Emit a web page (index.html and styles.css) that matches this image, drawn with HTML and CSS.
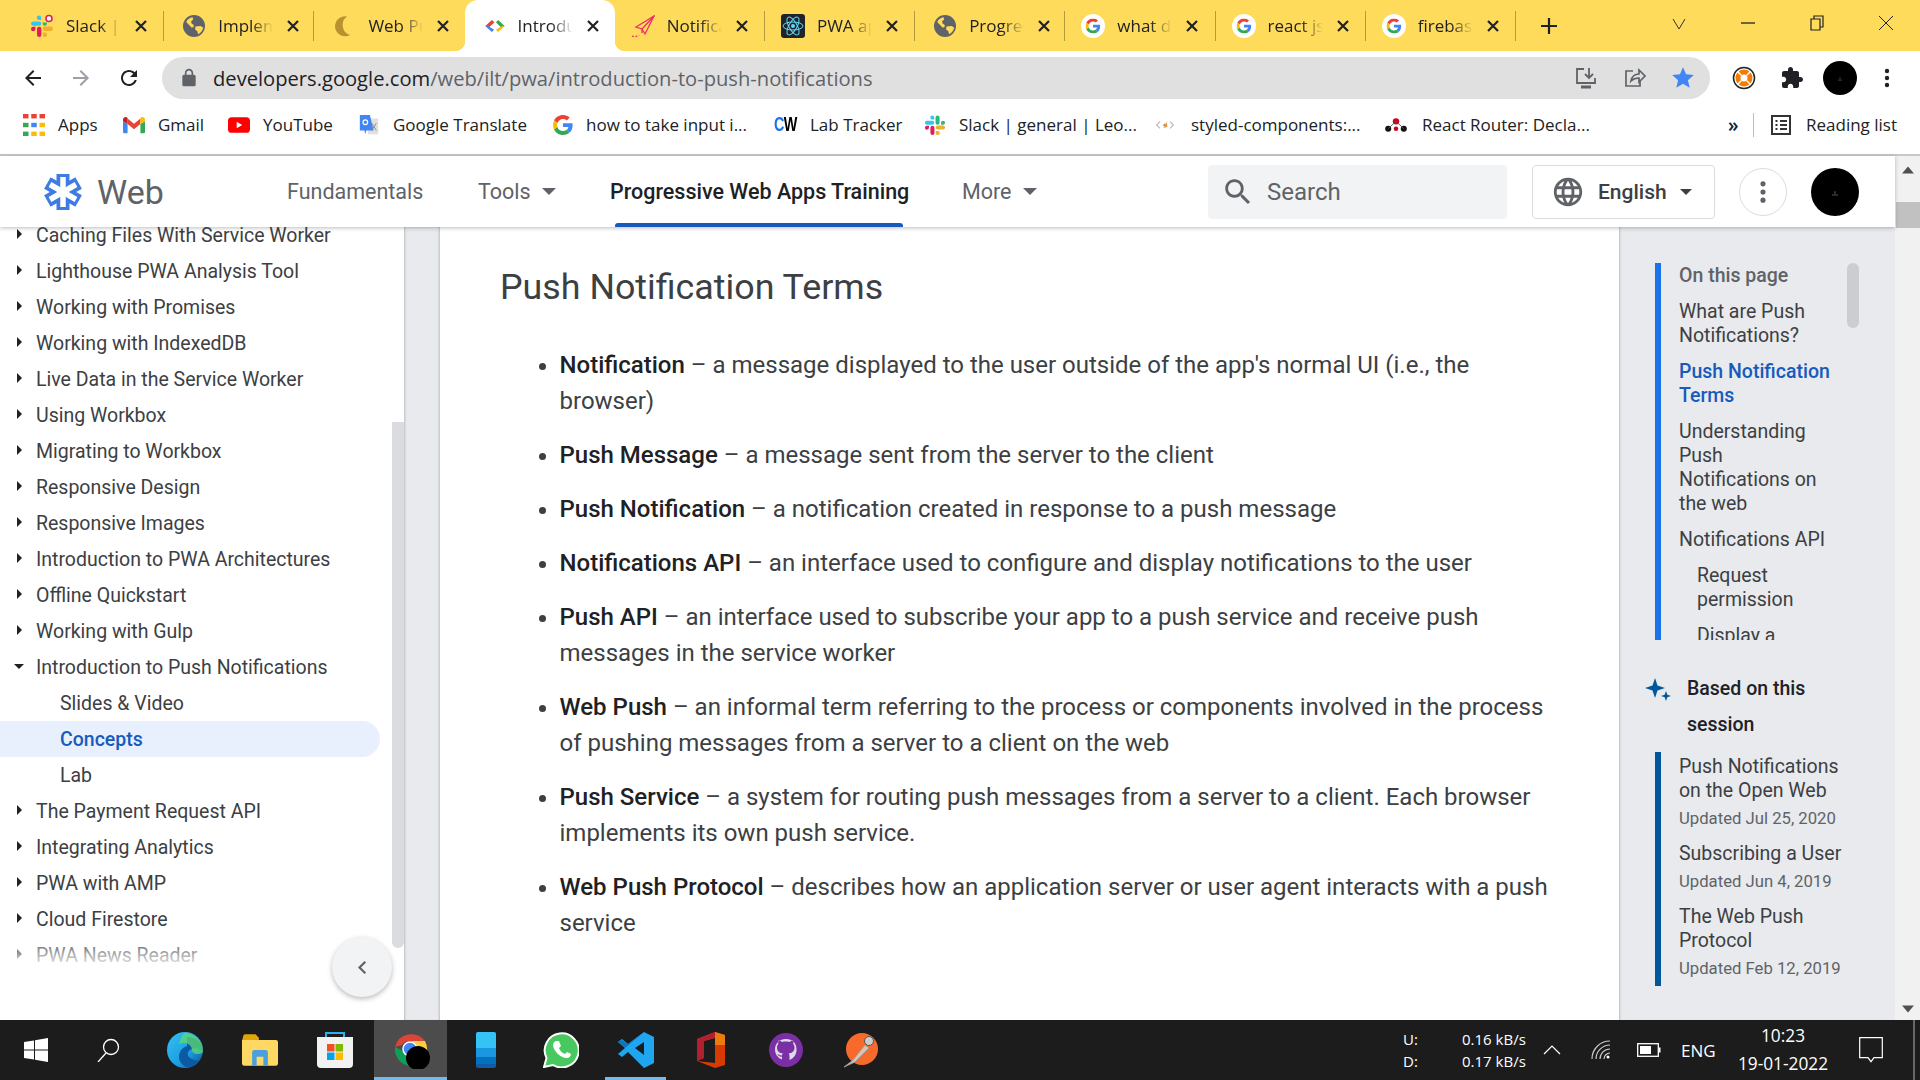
FILE: index.html
```html
<!DOCTYPE html>
<html lang="en">
<head>
<meta charset="utf-8">
<title>Introduction to Push Notifications</title>
<link rel="stylesheet" href="styles.css">
</head>
<body>
<svg class="defs" width="0" height="0">
  <defs>
    <symbol id="g" viewBox="0 0 48 48">
      <path fill="#EA4335" d="M24 9.5c3.54 0 6.71 1.22 9.21 3.6l6.85-6.85C35.9 2.38 30.47 0 24 0 14.62 0 6.51 5.38 2.56 13.22l7.98 6.19C12.43 13.72 17.74 9.5 24 9.5z"/>
      <path fill="#4285F4" d="M46.98 24.55c0-1.57-.15-3.09-.38-4.55H24v9.02h12.94c-.58 2.96-2.26 5.48-4.78 7.18l7.73 6c4.51-4.18 7.09-10.36 7.09-17.65z"/>
      <path fill="#FBBC05" d="M10.53 28.59c-.48-1.45-.76-2.99-.76-4.59s.27-3.14.76-4.59l-7.98-6.19C.92 16.46 0 20.12 0 24c0 3.88.92 7.54 2.56 10.78l7.97-6.19z"/>
      <path fill="#34A853" d="M24 48c6.48 0 11.93-2.13 15.89-5.81l-7.73-6c-2.15 1.45-4.92 2.3-8.16 2.3-6.26 0-11.57-4.22-13.47-9.91l-7.98 6.19C6.51 42.62 14.62 48 24 48z"/>
    </symbol>
    <symbol id="gcircle" viewBox="0 0 24 24">
      <circle cx="12" cy="12" r="12" fill="#fff"/>
      <use href="#g" x="4.5" y="4.5" width="15" height="15"/>
    </symbol>
    <symbol id="slack" viewBox="0 0 24 24">
      <path fill="#36C5F0" d="M9 1.5a2.2 2.2 0 0 0 0 4.4h2.2V3.7A2.2 2.2 0 0 0 9 1.5zM3.2 7.4a2.2 2.2 0 0 0 0 4.4H9a2.2 2.2 0 0 0 0-4.4z"/>
      <path fill="#2EB67D" d="M23 9.6a2.2 2.2 0 0 0-4.4 0v2.2h2.2A2.2 2.2 0 0 0 23 9.6zM17 9.6V3.7a2.2 2.2 0 0 0-4.4 0v5.9a2.2 2.2 0 0 0 4.4 0z"/>
      <path fill="#ECB22E" d="M15 23a2.2 2.2 0 0 0 0-4.4h-2.2v2.2A2.2 2.2 0 0 0 15 23zM15 17h5.8a2.2 2.2 0 0 0 0-4.4H15a2.2 2.2 0 0 0 0 4.4z"/>
      <path fill="#E01E5A" d="M1 15a2.2 2.2 0 0 0 4.4 0v-2.2H3.2A2.2 2.2 0 0 0 1 15zM7 15v5.8a2.2 2.2 0 0 0 4.4 0V15A2.2 2.2 0 0 0 7 15z"/>
    </symbol>
    <symbol id="slacktab" viewBox="0 0 24 24">
      <path fill="#36C5F0" d="M3.2 7.4a2.2 2.2 0 0 0 0 4.4H9a2.2 2.2 0 0 0 0-4.4zM9 1.500a2.200 2.200 0 0 0 0 4.400h2.200V3.700A2.200 2.200 0 0 0 9 1.500z"/>
      <path fill="#2EB67D" d="M17 9.600v-1h-4.400v1a2.200 2.200 0 0 0 4.400 0z"/>
      <circle cx="19" cy="4.500" r="3" fill="#fff" stroke="#E01E5A" stroke-width="1.600"/>
      <path fill="#ECB22E" d="M15 23a2.200 2.200 0 0 0 0-4.400h-2.200v2.200A2.200 2.200 0 0 0 15 23zM15 17h5.800a2.200 2.200 0 0 0 0-4.400H15a2.200 2.200 0 0 0 0 4.400z"/>
      <path fill="#E01E5A" d="M1 15a2.200 2.200 0 0 0 4.400 0v-2.200H3.200A2.200 2.200 0 0 0 1 15zM7 15v5.800a2.200 2.200 0 0 0 4.400 0V15A2.200 2.200 0 0 0 7 15z"/>
    </symbol>
    <symbol id="globe" viewBox="0 0 24 24">
      <circle cx="12" cy="12" r="12" fill="#5f6368"/>
      <path fill="#FFDB5C" d="M3.500 7.500c1.600-2.800 4-4.600 7-5l.6 2.300-2.200 2.100.4 2.400 2.400 1.700-.3 2.400L9.300 13.500 3.500 7.500zM13.500 12.500l5.500-.5 3 1.500c-.5 3-2.500 6-5.500 7.500l-1-3.500-2.200-1.500z"/>
    </symbol>
    <symbol id="back" viewBox="0 0 24 24"><path d="M20 11H7.830l5.590-5.590L12 4l-8 8 8 8 1.410-1.410L7.830 13H20v-2z"/></symbol>
    <symbol id="fwd" viewBox="0 0 24 24"><path d="M4 11h12.170l-5.590-5.590L12 4l8 8-8 8-1.410-1.410L16.170 13H4v-2z"/></symbol>
    <symbol id="reload" viewBox="0 0 24 24"><path d="M17.650 6.350C16.200 4.900 14.210 4 12 4c-4.420 0-7.990 3.580-7.990 8s3.570 8 7.990 8c3.730 0 6.840-2.550 7.730-6h-2.080c-.82 2.330-3.040 4-5.650 4-3.310 0-6-2.690-6-6s2.690-6 6-6c1.660 0 3.140.69 4.220 1.780L13 11h7V4l-2.350 2.350z"/></symbol>
    <symbol id="caret" viewBox="0 0 10 5"><path d="M0 0h10L5 5z"/></symbol>
    <symbol id="arrow-r" viewBox="0 0 5 10"><path d="M0 0l5 5-5 5z"/></symbol>
    <symbol id="arrow-d" viewBox="0 0 10 5"><path d="M0 0h10L5 5z"/></symbol>
    <symbol id="dots" viewBox="0 0 24 24"><circle cx="12" cy="5" r="2.200"/><circle cx="12" cy="12" r="2.200"/><circle cx="12" cy="19" r="2.200"/></symbol>
    <symbol id="avatar" viewBox="0 0 48 48"><circle cx="24" cy="24" r="24" fill="#000"/><path stroke="#555" stroke-width="1" d="M21 27h6M24 23v3"/></symbol>
    <symbol id="x" viewBox="0 0 12 12"><path d="M1 1l10 10M11 1L1 11" stroke="#202124" stroke-width="2.200" fill="none"/></symbol>
  </defs>
</svg>

<div class="screen">
  <div class="tabstrip">
    <div class="tab"><svg class="tab-ico"><use href="#slacktab"/></svg><span class="tab-text">Slack | general</span><svg class="tab-x"><use href="#x"/></svg></div>
    <div class="tab"><svg class="tab-ico tab-globe"><use href="#globe"/></svg><span class="tab-text">Implementing</span><svg class="tab-x"><use href="#x"/></svg></div>
    <div class="tab tab-pre"><svg class="tab-ico tab-moon" viewBox="0 0 24 24"><path fill="#B8922F" d="M15 2.500a10 10 0 1 0 3 18.500 10.500 10.500 0 0 1-3-18.500z"/></svg><span class="tab-text">Web Push</span><svg class="tab-x"><use href="#x"/></svg></div>
    <div class="tab tab-active"><svg class="tab-ico tab-ico-dev" viewBox="0 0 24 24"><path d="M8.500 5.500L1.500 12l3 2.500 7-6.500z" fill="#EA4335"/><path d="M1.500 12l7 6.500 2.500-2.500-6.500-4z" fill="#4285F4"/><path d="M15.500 5.500L22.500 12l-3 2.500-6.500-6.500z" fill="#34A853"/><path d="M22.500 12l-7 6.500-2.500-2.500 6.500-4z" fill="#FBBC05"/></svg><span class="tab-text">Introduction</span><svg class="tab-x"><use href="#x"/></svg></div>
    <div class="tab"><svg class="tab-ico" viewBox="0 0 24 24" fill="none" stroke="#EF2B6B" stroke-width="1.300"><path d="M23 2L5 13l6 2 3 5z"/><path d="M23 2L11 15v4"/><path d="M1 22c2 1 5 1 7-1" stroke-dasharray="2 1.500"/></svg><span class="tab-text">Notifications</span><svg class="tab-x"><use href="#x"/></svg></div>
    <div class="tab"><svg class="tab-ico" viewBox="0 0 24 24"><rect width="24" height="24" rx="3" fill="#20232A"/><g fill="none" stroke="#61DAFB" stroke-width="1"><ellipse cx="12" cy="12" rx="10" ry="4"/><ellipse cx="12" cy="12" rx="10" ry="4" transform="rotate(60 12 12)"/><ellipse cx="12" cy="12" rx="10" ry="4" transform="rotate(120 12 12)"/></g><circle cx="12" cy="12" r="2" fill="#61DAFB"/></svg><span class="tab-text">PWA app</span><svg class="tab-x"><use href="#x"/></svg></div>
    <div class="tab"><svg class="tab-ico tab-globe"><use href="#globe"/></svg><span class="tab-text">Progressive</span><svg class="tab-x"><use href="#x"/></svg></div>
    <div class="tab"><svg class="tab-ico"><use href="#gcircle"/></svg><span class="tab-text">what does</span><svg class="tab-x"><use href="#x"/></svg></div>
    <div class="tab"><svg class="tab-ico"><use href="#gcircle"/></svg><span class="tab-text">react js</span><svg class="tab-x"><use href="#x"/></svg></div>
    <div class="tab"><svg class="tab-ico"><use href="#gcircle"/></svg><span class="tab-text">firebase</span><svg class="tab-x"><use href="#x"/></svg></div>
    <svg class="tab-plus" viewBox="0 0 18 18"><path d="M9 1v16M1 9h16" stroke="#202124" stroke-width="2.200"/></svg>
    <div class="win-ctrl">
      <svg class="wc" viewBox="0 0 18 18"><path d="M3 5l6 10 6-10" fill="none" stroke="#333" stroke-width="1"/></svg>
      <svg class="wc" viewBox="0 0 18 18"><path d="M2 9h14" stroke="#222" stroke-width="1.300"/></svg>
      <svg class="wc" viewBox="0 0 18 18"><path d="M3 5h9v11H3zM6 5V2h9v11h-3" fill="none" stroke="#222" stroke-width="1.200"/></svg>
      <svg class="wc" viewBox="0 0 18 18"><path d="M2 2l14 14M16 2L2 16" stroke="#222" stroke-width="1"/></svg>
    </div>
  </div>

  <div class="toolbar">
    <svg class="tb-ico"><use href="#back"/></svg>
    <svg class="tb-ico tb-off"><use href="#fwd"/></svg>
    <svg class="tb-ico"><use href="#reload"/></svg>
    <div class="omnibox">
      <svg class="lock" viewBox="0 0 24 24"><path d="M18 8h-1V6c0-2.760-2.240-5-5-5S7 3.240 7 6v2H6c-1.100 0-2 .9-2 2v10c0 1.100.9 2 2 2h12c1.100 0 2-.9 2-2V10c0-1.100-.9-2-2-2zM9 6c0-1.660 1.340-3 3-3s3 1.340 3 3v2H9V6z"/></svg>
      <span class="url"><span class="url-host">developers.google.com</span>/web/ilt/pwa/introduction-to-push-notifications</span>
      <svg class="om-ico om-first" viewBox="0 0 24 24" fill="none" stroke="#5f6368" stroke-width="1.800"><path d="M10 3H3v14h18v-5"/><path d="M15 2v10M11 8l4 4 4-4"/><path d="M7 21h10" stroke-width="3"/></svg>
      <svg class="om-ico" viewBox="0 0 24 24" fill="none" stroke="#5f6368" stroke-width="1.700"><path d="M11 5H4v15h14v-6"/><path d="M9 15c1-5 4-7 8-7V4l6 6-6 6v-4c-3 0-6 1-8 3z"/></svg>
      <svg class="om-ico om-star" viewBox="0 0 24 24"><path fill="#4285F4" d="M12 17.270L18.180 21l-1.640-7.030L22 9.240l-7.190-.61L12 2 9.190 8.630 2 9.240l5.460 4.730L5.820 21z"/></svg>
    </div>
    <svg class="ext-ico" viewBox="0 0 24 24"><circle cx="12" cy="12" r="10.500" fill="#fff" stroke="#222" stroke-width="1.500"/><circle cx="12" cy="12" r="6" fill="none" stroke="#F57C00" stroke-width="5"/><path d="M12 3v5M12 16v5M3 12h5M16 12h5" stroke="#fff" stroke-width="1.500" transform="rotate(45 12 12)"/></svg>
    <svg class="ext-ico" viewBox="0 0 24 24"><path fill="#202124" d="M20.500 11H19V7c0-1.100-.9-2-2-2h-4V3.500C13 2.120 11.880 1 10.500 1S8 2.120 8 3.500V5H4c-1.100 0-1.990.9-1.990 2v3.800H3.500c1.490 0 2.700 1.210 2.700 2.700s-1.210 2.700-2.700 2.700H2V20c0 1.100.9 2 2 2h3.800v-1.500c0-1.490 1.210-2.700 2.700-2.700 1.490 0 2.700 1.210 2.700 2.700V22H17c1.100 0 2-.9 2-2v-4h1.500c1.380 0 2.500-1.120 2.500-2.500S21.880 11 20.500 11z"/></svg>
    <svg class="tb-avatar"><use href="#avatar"/></svg>
    <svg class="tb-dots"><use href="#dots"/></svg>
  </div>

  <div class="bookmarks">
    <div class="bm bm-apps"><svg class="bm-ico" viewBox="0 0 20 20"><rect x="0" y="0" width="5" height="4" fill="#EA4335"/><rect x="7.500" y="0" width="5" height="4" fill="#EA4335"/><rect x="15" y="0" width="5" height="4" fill="#EA4335"/><rect x="0" y="8" width="5" height="4" fill="#34A853"/><rect x="7.500" y="8" width="5" height="4" fill="#4285F4"/><rect x="15" y="8" width="5" height="4" fill="#FBBC05"/><rect x="0" y="16" width="5" height="4" fill="#34A853"/><rect x="7.500" y="16" width="5" height="4" fill="#FBBC05"/><rect x="15" y="16" width="5" height="4" fill="#FBBC05"/></svg>Apps</div>
    <div class="bm bm-gmail"><svg class="bm-ico" viewBox="0 0 24 18"><path fill="#4285F4" d="M0 5v11.500A1.500 1.500 0 0 0 1.500 18H5V8z"/><path fill="#34A853" d="M24 5v11.500a1.500 1.500 0 0 1-1.500 1.500H19V8z"/><path fill="#EA4335" d="M5 8v-6l7 5.500L19 2v6l-7 5.500z"/><path fill="#C5221F" d="M0 5V3c0-2.500 3-3.500 5-2v7z"/><path fill="#FBBC04" d="M24 5V3c0-2.500-3-3.500-5-2v7z"/></svg>Gmail</div>
    <div class="bm bm-yt"><svg class="bm-ico" viewBox="0 0 24 17"><rect width="24" height="17" rx="4" fill="#F00"/><path d="M9.500 5v7l6-3.500z" fill="#fff"/></svg>YouTube</div>
    <div class="bm bm-tr"><svg class="bm-ico" viewBox="0 0 24 24"><path d="M9 5h13v17H11z" fill="#E0E0E0"/><path d="M2 1h11l4 17H9l-1 4-1-4H2z" fill="#4285F4"/><circle cx="8" cy="9" r="2.500" fill="none" stroke="#fff" stroke-width="1.300"/><path d="M15 10l5 8M20 10l-5 8" stroke="#888" stroke-width="1"/></svg>Google Translate</div>
    <div class="bm bm-how"><svg class="bm-ico bm-ico-g"><use href="#g"/></svg>how to take input i...</div>
    <div class="bm bm-lab"><span class="cw"><span class="cw-c">C</span>W</span>Lab Tracker</div>
    <div class="bm bm-sl"><svg class="bm-ico"><use href="#slack"/></svg>Slack | general | Leo...</div>
    <div class="bm bm-st"><svg class="bm-ico bm-ico-st" viewBox="0 0 24 24"><path d="M6 8l-4 4 4 4M18 8l4 4-4 4" fill="none" stroke="#bbb" stroke-width="1.500"/><path d="M10 16l4-8 1 6z" fill="#E5A13B"/><path d="M9 13l3-3 1 3z" fill="#B06CC9"/></svg>styled-components:...</div>
    <div class="bm bm-rr"><svg class="bm-ico bm-ico-rr" viewBox="0 0 24 18"><circle cx="12" cy="5" r="3.500" fill="#D0021B"/><circle cx="3.500" cy="13" r="3.300" fill="#121212"/><circle cx="20.500" cy="13" r="3.300" fill="#121212"/><circle cx="12" cy="13" r="2.500" fill="#D0021B"/><path d="M3.500 13L12 5l8.500 8" fill="none" stroke="#555" stroke-width="1"/></svg>React Router: Decla...</div>
    <span class="bm-more">»</span>
    <span class="bm-sep"></span>
    <div class="bm bm-rl"><svg class="bm-ico bm-rl-ico" viewBox="0 0 20 20" fill="none" stroke="#333" stroke-width="2"><rect x="1" y="1" width="18" height="18"/><path d="M4.500 6h2M9 6h7M4.500 10h2M9 10h7M4.500 14h2M9 14h7"/></svg>Reading list</div>
  </div>

  <div class="page">
    <div class="page-col">
      <header class="site-header">
        <svg class="logo" viewBox="0 0 42 42"><g stroke="#3F7BE4" stroke-width="13" stroke-linecap="butt"><path d="M21 21V3"/><path d="M21 21L36.600 12"/><path d="M21 21L36.600 30"/><path d="M21 21V39"/><path d="M21 21L5.400 30"/><path d="M21 21L5.400 12"/></g><g stroke="#fff" stroke-width="5.500"><path d="M21 21V6"/><path d="M21 21L34 13.500"/><path d="M21 21L34 28.500"/><path d="M21 21V36"/><path d="M21 21L8 28.500"/><path d="M21 21L8 13.500"/></g></svg>
        <span class="brand">Web</span>
        <nav class="nav">
          <span class="nav-item nav-fund">Fundamentals</span>
          <span class="nav-item nav-tools">Tools<svg class="nav-caret"><use href="#caret"/></svg></span>
          <span class="nav-item nav-active">Progressive Web Apps Training</span>
          <span class="nav-item nav-more">More<svg class="nav-caret"><use href="#caret"/></svg></span>
        </nav>
        <div class="search">
          <svg class="search-ico" viewBox="0 0 24 24"><path d="M15.500 14h-.79l-.28-.27C15.410 12.590 16 11.110 16 9.500 16 5.910 13.090 3 9.500 3S3 5.910 3 9.500 5.910 16 9.500 16c1.610 0 3.090-.59 4.230-1.570l.27.28v.79l5 4.990L20.490 19l-4.990-5zm-6 0C7.010 14 5 11.990 5 9.500S7.010 5 9.500 5 14 7.010 14 9.500 11.990 14 9.500 14z"/></svg>
          <span>Search</span>
        </div>
        <div class="lang">
          <svg class="lang-ico" viewBox="0 0 24 24"><path d="M11.990 2C6.470 2 2 6.480 2 12s4.470 10 9.990 10C17.520 22 22 17.520 22 12S17.520 2 11.990 2zm6.930 6h-2.950c-.32-1.250-.78-2.450-1.380-3.560 1.840.63 3.370 1.910 4.330 3.560zM12 4.040c.83 1.200 1.480 2.530 1.910 3.960h-3.820c.43-1.430 1.080-2.760 1.910-3.960zM4.260 14C4.100 13.360 4 12.690 4 12s.1-1.360.26-2h3.380c-.08.66-.14 1.320-.14 2 0 .68.06 1.340.14 2H4.260zm.82 2h2.950c.32 1.250.78 2.450 1.380 3.560-1.840-.63-3.370-1.900-4.330-3.560zm2.950-8H5.080c.96-1.660 2.490-2.930 4.330-3.560C8.810 5.550 8.350 6.750 8.030 8zM12 19.960c-.83-1.200-1.480-2.530-1.910-3.960h3.820c-.43 1.430-1.080 2.760-1.910 3.960zM14.340 14H9.660c-.09-.66-.16-1.320-.16-2 0-.68.07-1.350.16-2h4.680c.09.650.16 1.320.16 2 0 .68-.07 1.340-.16 2zm.25 5.560c.6-1.110 1.060-2.310 1.380-3.560h2.950c-.96 1.650-2.490 2.930-4.330 3.560zM16.360 14c.08-.66.14-1.320.14-2 0-.68-.06-1.340-.14-2h3.380c.16.64.26 1.310.26 2s-.1 1.360-.26 2h-3.380z"/></svg>
          <span class="lang-text">English</span>
          <svg class="lang-caret"><use href="#caret"/></svg>
        </div>
        <div class="more-btn"><svg class="more-dots"><use href="#dots"/></svg></div>
        <svg class="hd-avatar"><use href="#avatar"/></svg>
      </header>

      <div class="body-row">
        <aside class="sidebar">
          <ul class="side-list">
            <li class="side-item"><svg class="ar"><use href="#arrow-r"/></svg>Caching Files With Service Worker</li>
            <li class="side-item"><svg class="ar"><use href="#arrow-r"/></svg>Lighthouse PWA Analysis Tool</li>
            <li class="side-item"><svg class="ar"><use href="#arrow-r"/></svg>Working with Promises</li>
            <li class="side-item"><svg class="ar"><use href="#arrow-r"/></svg>Working with IndexedDB</li>
            <li class="side-item"><svg class="ar"><use href="#arrow-r"/></svg>Live Data in the Service Worker</li>
            <li class="side-item"><svg class="ar"><use href="#arrow-r"/></svg>Using Workbox</li>
            <li class="side-item"><svg class="ar"><use href="#arrow-r"/></svg>Migrating to Workbox</li>
            <li class="side-item"><svg class="ar"><use href="#arrow-r"/></svg>Responsive Design</li>
            <li class="side-item"><svg class="ar"><use href="#arrow-r"/></svg>Responsive Images</li>
            <li class="side-item"><svg class="ar"><use href="#arrow-r"/></svg>Introduction to PWA Architectures</li>
            <li class="side-item"><svg class="ar"><use href="#arrow-r"/></svg>Offline Quickstart</li>
            <li class="side-item"><svg class="ar"><use href="#arrow-r"/></svg>Working with Gulp</li>
            <li class="side-item"><svg class="ar-d"><use href="#arrow-d"/></svg>Introduction to Push Notifications</li>
            <li class="side-item side-sub">Slides &amp; Video</li>
            <li class="side-item side-sub side-cur">Concepts</li>
            <li class="side-item side-sub">Lab</li>
            <li class="side-item"><svg class="ar"><use href="#arrow-r"/></svg>The Payment Request API</li>
            <li class="side-item"><svg class="ar"><use href="#arrow-r"/></svg>Integrating Analytics</li>
            <li class="side-item"><svg class="ar"><use href="#arrow-r"/></svg>PWA with AMP</li>
            <li class="side-item"><svg class="ar"><use href="#arrow-r"/></svg>Cloud Firestore</li>
            <li class="side-item"><svg class="ar"><use href="#arrow-r"/></svg>PWA News Reader</li>
          </ul>
          <div class="side-fade"></div>
          <div class="side-thumb"></div>
          <div class="fab"><svg class="fab-ico" viewBox="0 0 12 18"><path d="M10 2L3 9l7 7" fill="none" stroke="#5f6368" stroke-width="2.600"/></svg></div>
        </aside>
        <div class="gutter"></div>
        <main class="main">
          <h2 class="title">Push Notification Terms</h2>
          <ul class="terms">
            <li><b>Notification</b> – a message displayed to the user outside of the app's normal UI (i.e., the browser)</li>
            <li><b>Push Message</b> – a message sent from the server to the client</li>
            <li><b>Push Notification</b> – a notification created in response to a push message</li>
            <li><b>Notifications API</b> – an interface used to configure and display notifications to the user</li>
            <li><b>Push API</b> – an interface used to subscribe your app to a push service and receive push messages in the service worker</li>
            <li><b>Web Push</b> – an informal term referring to the process or components involved in the process of pushing messages from a server to a client on the web</li>
            <li><b>Push Service</b> – a system for routing push messages from a server to a client. Each browser implements its own push service.</li>
            <li><b>Web Push Protocol</b> – describes how an application server or user agent interacts with a push service</li>
          </ul>
        </main>
        <aside class="toc">
          <div class="toc-box">
            <div class="toc-thumb"></div>
            <div class="toc-head">On this page</div>
            <div class="toc-item">What are Push Notifications?</div>
            <div class="toc-item toc-cur">Push Notification Terms</div>
            <div class="toc-item">Understanding Push Notifications on the web</div>
            <div class="toc-item">Notifications API</div>
            <div class="toc-item toc-sub">Request permission</div>
            <div class="toc-item toc-sub">Display a notification</div>
          </div>
          <div class="based">
            <svg class="spark" viewBox="0 0 26 24"><path fill="#01579B" d="M10 1l2.500 7.500L20 11l-7.500 2.500L10 21l-2.500-7.500L0 11l7.500-2.500z"/><path fill="#01579B" d="M21 14l1.300 3.700L26 19l-3.700 1.300L21 24l-1.300-3.700L16 19l3.700-1.300z"/></svg>
            <span class="based-text">Based on this session</span>
          </div>
          <div class="sess">
            <div class="sess-t">Push Notifications on the Open Web</div>
            <div class="sess-d">Updated Jul 25, 2020</div>
            <div class="sess-t">Subscribing a User</div>
            <div class="sess-d">Updated Jun 4, 2019</div>
            <div class="sess-t">The Web Push Protocol</div>
            <div class="sess-d">Updated Feb 12, 2019</div>
          </div>
        </aside>
      </div>
    </div>
    <div class="page-scroll">
      <svg class="ps-arrow" viewBox="0 0 10 6"><path d="M0 6h10L5 0z"/></svg>
      <div class="ps-thumb"></div>
      <svg class="ps-arrow ps-down" viewBox="0 0 10 6"><path d="M0 0h10L5 6z"/></svg>
    </div>
  </div>

  <footer class="taskbar">
    <div class="tk tk-first"><svg class="tk-ico" viewBox="0 0 24 24"><path fill="#fff" d="M0 4l10-1.500V11.500H0zM11 2.300L24 0v11.500H11zM0 12.500h10v9L0 20zM11 12.500h13V24l-13-2.200z"/></svg></div>
    <div class="tk"><svg class="tk-ico tk-search" viewBox="0 0 24 24" fill="none" stroke="#fff" stroke-width="1.300"><circle cx="15" cy="9" r="7.500"/><path d="M10 15L2 24"/></svg></div>
    <div class="tk"><svg class="tk-ico tk-big" viewBox="0 0 36 36"><defs><linearGradient id="edge" x1="0" y1="0" x2="1" y2="1"><stop offset="0" stop-color="#35C1F1"/><stop offset=".6" stop-color="#1B9DE2"/><stop offset="1" stop-color="#114A8B"/></linearGradient></defs><circle cx="18" cy="18" r="18" fill="url(#edge)"/><path d="M20 5c8 0 16 5 16 15-3-3-7-5-11-3-4 1-6 6-2 9 3 2 7 3 10 2-3 5-9 8-14 7 4 1-7-1-7-10 0-7 5-10 8-11z" fill="#0C59A4"/><path d="M18 1c9 0 18 7 18 18 0 2-2 3-5 3-4 0-6-2-6-4 0-5-6-9-13-6 2-7 4-11 6-11z" fill="#5DDB6D" opacity=".75"/></svg></div>
    <div class="tk"><svg class="tk-ico tk-big" viewBox="0 0 32 28"><path d="M1 2a2 2 0 0 1 2-2h9l3 3v3H0z" fill="#E0A608"/><path d="M0 5h30a2 2 0 0 1 2 2v19a2 2 0 0 1-2 2H2a2 2 0 0 1-2-2z" fill="#FFD764"/><path d="M9 28V16a2 2 0 0 1 2-2h10a2 2 0 0 1 2 2v12h-4v-8h-6v8z" fill="#4AA0DF"/></svg></div>
    <div class="tk"><svg class="tk-ico tk-big" viewBox="0 0 36 36"><path d="M0 5h36v27a4 4 0 0 1-4 4H4a4 4 0 0 1-4-4z" fill="#F2F2F2"/><path d="M9 5V1h18v4" fill="none" stroke="#2AB2F0" stroke-width="2"/><rect x="10" y="12" width="7.500" height="7.500" fill="#F25022"/><rect x="18.500" y="12" width="7.500" height="7.500" fill="#7FBA00"/><rect x="10" y="20.500" width="7.500" height="7.500" fill="#00A4EF"/><rect x="18.500" y="20.500" width="7.500" height="7.500" fill="#FFB900"/></svg></div>
    <div class="tk tk-active"><svg class="tk-ico tk-chrome" viewBox="0 0 38 38"><path d="M3 16A17 17 0 0 1 33 10H18a9 9 0 0 0-8 4z" fill="#DB4437"/><path d="M3 16A17 17 0 0 0 17 35l6-10a9 9 0 0 1-12-5z" fill="#0F9D58"/><path d="M33 10H19a9 9 0 0 1 4 15l-6 10A17 17 0 0 0 33 10z" fill="#FFCD40"/><circle cx="18" cy="18" r="7" fill="#4285F4" stroke="#fff" stroke-width="1.500"/><circle cx="26" cy="27" r="12" fill="#000"/></svg></div>
    <div class="tk"><svg class="tk-ico tk-phone" viewBox="0 0 20 36"><rect width="20" height="36" rx="2" fill="#0F5DA8"/><path d="M0 2a2 2 0 0 1 2-2h16a2 2 0 0 1 2 2v14H0z" fill="#35C3F5"/><rect y="16" width="20" height="9" fill="#1A97DF"/><rect y="25" width="20" height="7" fill="#0570BE"/></svg></div>
    <div class="tk"><svg class="tk-ico tk-big" viewBox="0 0 36 36"><path d="M1 35l2.500-9A17 17 0 1 1 10 33z" fill="#48C95F" stroke="#fff" stroke-width="2"/><path fill="#fff" d="M13 9c-1 0-3 2-3 4 0 5 7 13 14 13 2 0 4-2 4-4l-4-2-2 2c-3-1-5-3-6-6l2-2-2-5z"/></svg></div>
    <div class="tk tk-vs"><svg class="tk-ico tk-big" viewBox="0 0 36 36"><path d="M26 0l10 5v26l-10 5L10 20l-6 5-4-3 7-6-7-6 4-3 6 5zM26 10L17 16l9 7z" fill="#1FA6F0"/><path d="M26 0L10 12 4 8 0 10l7 6 19-16z" fill="#0B78BE"/></svg></div>
    <div class="tk"><svg class="tk-ico tk-big" viewBox="0 0 28 36"><path d="M0 7L18 0l10 3v30l-10 3L0 29l18 2V6L7 9v17L0 29z" fill="#D83B01"/><path d="M0 7L18 0v6L7 9v17l-7 3z" fill="#B0202F"/><path d="M18 0l10 3v10H18z" fill="#EB7B0F"/></svg></div>
    <div class="tk"><svg class="tk-ico tk-big" viewBox="0 0 36 36"><circle cx="18" cy="18" r="17" fill="#7B2FA5"/><path fill="#DCDCE6" d="M18 7c-6.500 0-11 4.500-11 10.500 0 4.500 2.800 8.500 7 10v-3c-3 1-4-2-5-2.500 2 0 2.500 2 5 1.500 0-1 .3-1.500 1-2-3.500-.4-6-2-6-6 0-1.500.5-2.500 1.300-3.500-.3-1-.2-2.300.2-3.500 1.500 0 2.500.7 3.500 1.500 2.500-.6 5-.6 7.500 0 1-.8 2-1.500 3.500-1.500.4 1.200.5 2.500.2 3.500.8 1 1.300 2 1.300 3.500 0 4-2.500 5.600-6 6 .7.600 1 1.500 1 2.500v4c4.200-1.500 7-5.500 7-10C29 11.500 24.500 7 18 7z"/></svg></div>
    <div class="tk"><svg class="tk-ico tk-big" viewBox="0 0 36 36"><circle cx="19" cy="17" r="16" fill="#F76A2C"/><path d="M1 35l8-6 13-16 4 3L12 30z" fill="#E3C1A8" stroke="#999" stroke-width="1"/><circle cx="26" cy="9" r="4.500" fill="#ccc" stroke="#555" stroke-width="1"/></svg></div>
    <div class="tray">
      <div class="net-labels"><span>U:</span><span>D:</span></div>
      <div class="net-values"><span>0.16 kB/s</span><span>0.17 kB/s</span></div>
      <svg class="tray-chev" viewBox="0 0 18 10"><path d="M1 9l8-8 8 8" fill="none" stroke="#fff" stroke-width="1.200"/></svg>
      <svg class="tray-wifi" viewBox="0 0 20 20" fill="none" stroke="#ccc" stroke-width="1.200"><path d="M1 19A18 18 0 0 1 19 1M5 19A14 14 0 0 1 19 5M9 19A10 10 0 0 1 19 9M13 19a6 6 0 0 1 6-6"/><circle cx="17" cy="17" r="1.500" fill="#fff" stroke="none"/></svg>
      <svg class="tray-bat" viewBox="0 0 24 14"><rect x=".7" y=".7" width="20.600" height="12.600" fill="none" stroke="#fff" stroke-width="1.300"/><rect x="3" y="3" width="11" height="8" fill="#fff"/><rect x="22" y="4.500" width="1.500" height="5" fill="#fff"/></svg>
      <span class="tray-eng">ENG</span>
      <div class="clock"><span>10:23</span><span>19-01-2022</span></div>
      <svg class="tray-note" viewBox="0 0 24 26"><path d="M.7.7h22.600v20H15l-3 4-3-4H.7z" fill="none" stroke="#fff" stroke-width="1.200"/></svg>
    </div>
  </footer>
</div>
</body>
</html>
```
FILE: styles.css
```css
* { box-sizing: border-box; }
html, body { margin: 0; padding: 0; }
.defs { position: absolute; }
.screen { width: 1920px; height: 1080px; overflow: hidden; display: flex; flex-direction: column; font-family: Roboto, "Liberation Sans", sans-serif; background: #fff; }
svg { display: block; flex: none; }

/* tab strip */
.tabstrip { height: 51px; background: #FFDB5C; display: flex; align-items: stretch; padding-left: 14px; flex: none; font-family: "Open Sans", sans-serif; }
.tab { width: 150.2px; position: relative; display: flex; align-items: center; padding-left: 16px; color: #202124; font-size: 17px; flex: none; }
.tab::after { content: ""; position: absolute; right: 0; top: 11px; height: 30px; width: 1px; background: #B39B3E; }
.tab-pre::after { display: none; }
.tab-active { background: #fff; border-radius: 13px 13px 0 0; padding-left: 19px; z-index: 1; }
.tab-active::after { left: -10px; right: auto; top: auto; bottom: 0; width: 10px; height: 10px; background: radial-gradient(circle at 0 0, #FFDB5C 10px, #fff 10.5px); }
.tab-active::before { content: ""; position: absolute; right: -10px; bottom: 0; width: 10px; height: 10px; background: radial-gradient(circle at 100% 0, #FFDB5C 10px, #fff 10.5px); }
.tab-ico { width: 24px; height: 24px; }
.tab-globe { width: 22px; height: 22px; margin: 0 1px 0 3px; }
.tab-moon { margin-left: 2px; }
.tab-ico-dev { width: 22px; height: 22px; }
.tab-text { margin-left: 12px; width: 55px; overflow: hidden; white-space: nowrap; -webkit-mask-image: linear-gradient(90deg, #000 60%, transparent 100%); mask-image: linear-gradient(90deg, #000 60%, transparent 100%); }
.tab-x { width: 12px; height: 12px; margin-left: 14px; }
.tab-plus { width: 18px; height: 18px; margin: 17px 0 0 24px; }
.win-ctrl { display: flex; align-items: center; gap: 51px; margin: -6px 0 0 112px; }
.wc { width: 18px; height: 18px; }

/* toolbar */
.toolbar { height: 54px; flex: none; display: flex; align-items: center; padding: 0 21px; position: relative; background: #fff; }
.tb-ico { width: 24px; height: 24px; margin-right: 24px; fill: #202124; }
.tb-off { fill: #9AA0A6; }
.omnibox { width: 1552px; height: 42px; margin-left: -3px; background: #E0E0E0; border-radius: 21px; display: flex; align-items: center; padding-left: 17px; }
.lock { width: 20px; height: 20px; fill: #5f6368; }
.url { margin-left: 14px; font-family: "Open Sans", sans-serif; font-size: 20.150px; color: #5f6368; white-space: nowrap; }
.url-host { color: #202124; }
.om-ico { width: 24px; height: 24px; margin-left: 24px; }
.om-first { margin-left: auto; }
.om-star { width: 26px; height: 26px; margin-right: 14px; }
.ext-ico { width: 24px; height: 24px; margin-left: 22px; margin-right: 2px; }
.tb-avatar { width: 34px; height: 34px; margin-left: 17px; }
.tb-dots { width: 24px; height: 24px; margin-left: 18px; fill: #202124; }

/* bookmarks */
.bookmarks { height: 51px; flex: none; display: flex; align-items: center; padding: 0 0 10px 23px; font-family: "Open Sans", sans-serif; font-size: 17px; color: #202124; border-bottom: 2px solid #C8C8C8; white-space: nowrap; }
.bm { display: flex; align-items: center; flex: none; }
.bm-ico { width: 22px; height: 22px; margin-right: 13px; }
.bm-ico-g { width: 20px; height: 20px; margin-right: 13px; }
.bm-ico-st { width: 20px; height: 20px; margin-right: 16px; }
.bm-ico-rr { margin-right: 15px; }
.bm-rl-ico { width: 20px; height: 20px; margin-right: 15px; }
.bm-apps { width: 100px; } .bm-gmail { width: 105px; } .bm-yt { width: 130px; } .bm-tr { width: 195px; }
.bm-how { width: 221px; } .bm-lab { width: 150px; } .bm-sl { width: 231px; } .bm-st { width: 230px; } .bm-rr { width: 343px; }
.cw { width: 24px; margin-right: 12px; font-weight: 800; font-size: 20px; letter-spacing: -1px; color: #000; font-family: "Liberation Sans", sans-serif; transform: scaleX(.72); transform-origin: left center; white-space: nowrap; }
.cw-c { color: #1A73E8; }
.bm-more { width: 25px; font-size: 19px; font-weight: 600; }
.bm-sep { width: 1px; height: 24px; background: #BDBDBD; margin-right: 17px; }

/* page */
.page { flex: 1; min-height: 0; display: flex; }
.page-col { width: 1895px; display: flex; flex-direction: column; }
.page-scroll { width: 25px; background: #F1F1F1; display: flex; flex-direction: column; align-items: center; padding-top: 10px; }
.ps-arrow { width: 12px; height: 8px; fill: #505050; }
.ps-thumb { width: 24px; height: 26px; background: #C1C1C1; margin-top: 28px; }
.ps-down { margin-top: auto; margin-bottom: 7px; }

.site-header { height: 71px; flex: none; background: #fff; display: flex; align-items: center; position: relative; z-index: 3; box-shadow: 0 1px 4px rgba(60,64,67,.35); padding-left: 42px; }
.logo { width: 42px; height: 42px; }
.brand { margin-left: 13px; font-size: 34px; color: #5f6368; width: 190px; }
.nav { display: flex; align-items: stretch; height: 71px; font-size: 21.500px; color: #5f6368; }
.nav-item { display: flex; align-items: center; white-space: nowrap; }
.nav-fund { width: 191px; }
.nav-tools { width: 132px; }
.nav-active { width: 352px; color: #202124; font-weight: 500; position: relative; }
.nav-active::after { content: ""; position: absolute; left: 5px; bottom: 0; width: 288px; height: 4px; background: #185ABC; border-radius: 3px 3px 0 0; }
.nav-more { width: 246px; }
.nav-caret { width: 14px; height: 7px; fill: #5f6368; margin-left: 11px; }
.search { width: 299px; height: 54px; background: #F1F3F4; border-radius: 4px; display: flex; align-items: center; padding-left: 13px; font-size: 24px; color: #5f6368; }
.search-ico { width: 34px; height: 34px; fill: #5f6368; margin-right: 12px; }
.lang { width: 183px; height: 54px; margin-left: 25px; border: 1px solid #DADCE0; border-radius: 4px; display: flex; align-items: center; padding-left: 18px; font-size: 21px; color: #3c4043; font-weight: 500; }
.lang-ico { width: 34px; height: 34px; fill: #5f6368; }
.lang-text { margin-left: 13px; }
.lang-caret { width: 12px; height: 6px; margin-left: 13px; fill: #3c4043; }
.more-btn { width: 48px; height: 48px; margin-left: 24px; border: 1px solid #DADCE0; border-radius: 50%; display: flex; align-items: center; justify-content: center; }
.more-dots { width: 28px; height: 28px; fill: #5f6368; }
.hd-avatar { width: 48px; height: 48px; margin-left: 24px; }

.body-row { flex: 1; min-height: 0; display: flex; }
.sidebar { width: 404px; flex: none; position: relative; overflow: hidden; background: #fff; }
.side-list { list-style: none; margin: -10px 0 0; padding: 0; }
.side-item { height: 36px; display: flex; align-items: center; padding-left: 36px; position: relative; font-size: 19.500px; color: #3c4043; white-space: nowrap; }
.ar { position: absolute; left: 17px; top: 12px; width: 5px; height: 10px; fill: #202124; }
.ar-d { position: absolute; left: 14px; top: 15px; width: 10px; height: 5px; fill: #202124; }
.side-sub { padding-left: 60px; }
.side-cur { width: 380px; background: #E8F0FE; border-radius: 0 18px 18px 0; color: #185ABC; font-weight: 500; }
.side-fade { position: absolute; left: 0; right: 12px; top: 712px; height: 30px; background: linear-gradient(rgba(255,255,255,.1), #fff); }
.side-thumb { position: absolute; right: 0; top: 195px; width: 12px; height: 526px; background: #DADCE0; border-radius: 0 0 6px 6px; }
.fab { position: absolute; left: 332px; top: 710px; width: 60px; height: 60px; border-radius: 50%; background: #F1F3F4; box-shadow: 0 2px 5px rgba(60,64,67,.35); display: flex; align-items: center; justify-content: center; }
.fab-ico { width: 10px; height: 15px; }
.gutter { width: 36px; flex: none; background: #E8EAED; box-shadow: inset 2px 0 2px -1px rgba(60,64,67,.25), inset -2px 0 2px -1px rgba(60,64,67,.25); }
.main { flex: 1; min-width: 0; background: #fff; padding: 0 64px 0 60px; color: #202124; }
.title { margin: 35px 0 0; font-size: 35.800px; line-height: 50px; font-weight: 400; color: #3c4043; }
.terms { margin: 35px 0 0; padding: 0 0 0 59.500px; font-size: 24px; line-height: 36px; color: #3c4043; }
.terms li { margin-bottom: 18px; }
.terms b { font-weight: 500; color: #202124; }

.toc { width: 276px; flex: none; background: #E8EAED; box-shadow: inset 2px 0 2px -1px rgba(60,64,67,.25); padding: 36px 0 0 36px; font-size: 19.500px; line-height: 24px; color: #3c4043; }
.toc-box { position: relative; width: 204px; height: 377px; overflow: hidden; border-left: 6px solid #1A73E8; padding: 1px 25px 0 18px; }
.toc-thumb { position: absolute; left: 186px; top: 0; width: 12px; height: 65px; background: #CBCDD1; border-radius: 6px; }
.toc-head { font-weight: 500; color: #5f6368; margin-bottom: 12px; }
.toc-item { margin-bottom: 12px; }
.toc-cur { color: #185ABC; font-weight: 500; }
.toc-sub { padding-left: 18px; }
.based { display: flex; margin: 31px 0 0 -10px; line-height: 36px; font-weight: 500; color: #202124; }
.spark { width: 26px; height: 24px; margin-top: 6px; }
.based-text { margin-left: 16px; width: 150px; }
.sess { margin-top: 9px; border-left: 6px solid #01579B; padding: 3px 0 5px 18px; width: 194px; }
.sess-t { color: #3c4043; }
.sess-d { font-size: 16.700px; color: #5f6368; margin: 4px 0 11px; white-space: nowrap; }
.sess-d:last-child { margin-bottom: 0; }

/* taskbar */
.taskbar { height: 60px; flex: none; background: #1C1C1C; display: flex; color: #fff; font-family: "Open Sans", sans-serif; position: relative; }
.tk { width: 75px; display: flex; align-items: center; justify-content: center; position: relative; flex: none; }
.tk-first { width: 72px; }
.tk-ico { width: 24px; height: 24px; }
.tk-search { margin-right: 4px; }
.tk-big { width: 36px; height: 36px; }
.tk-chrome { width: 38px; height: 38px; }
.tk-phone { width: 20px; height: 36px; }
.tk-active { background: #4C4C4C; width: 73px; margin: 0 1px 0 2px; }
.tk-active::after, .tk-vs::after { content: ""; position: absolute; bottom: 0; height: 3px; left: 0; right: 0; background: #76B9ED; }
.tk-vs::after { left: 7px; right: 7px; }
.tray { margin-left: auto; width: 530px; display: flex; align-items: center; position: relative; font-size: 15px; }
.tray::after { content: ""; position: absolute; right: 5px; top: 0; bottom: 0; width: 2px; background: #666; }
.net-labels { display: flex; flex-direction: column; gap: 4px; width: 59px; margin-left: 13px; line-height: 18px; }
.net-values { display: flex; flex-direction: column; gap: 4px; width: 64px; line-height: 18px; white-space: nowrap; }
.tray-chev { width: 18px; height: 10px; margin-left: 17px; }
.tray-wifi { width: 20px; height: 20px; margin-left: 30px; }
.tray-bat { width: 24px; height: 14px; margin-left: 26px; }
.tray-eng { margin-left: 20px; font-size: 17px; width: 36px; }
.clock { display: flex; flex-direction: column; align-items: center; width: 94px; margin-left: 19px; font-size: 17.300px; line-height: 28px; }
.tray-note { width: 24px; height: 26px; margin-left: 29px; }
```
